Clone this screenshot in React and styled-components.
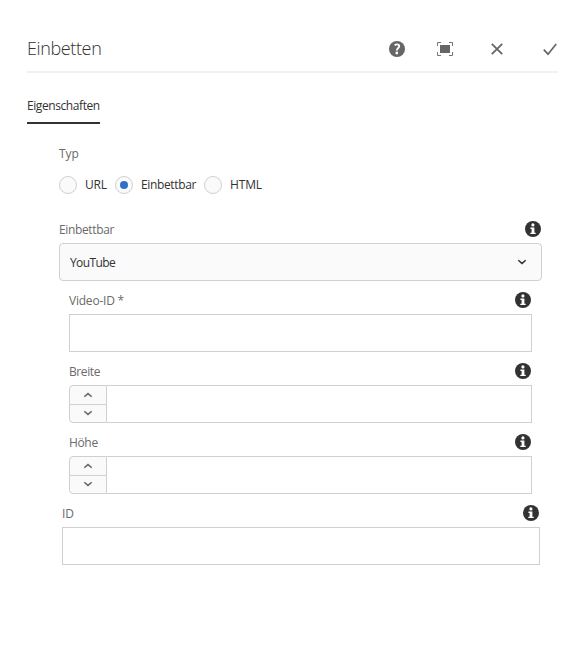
import React from "react";
import styled, { createGlobalStyle } from "styled-components";

const GlobalStyle = createGlobalStyle`
  *, *::before, *::after { box-sizing: border-box; }
  body { margin: 0; background: #fff; font-family: "Open Sans", "Noto Sans", sans-serif; }
`;

const Dialog = styled.form`
  width: 588px;
  height: 648px;
  padding: 25px 30px 0 27px;
  background: #fff;
  color: #323232;
  font-size: 12px;
`;

const Header = styled.header`
  display: flex;
  justify-content: space-between;
  width: 531px;
  height: 48px;
  border-bottom: 2px solid #f0f0f0;
`;

const Title = styled.h1`
  margin: 0;
  font-size: 18px;
  font-weight: 300;
  line-height: 47px;
  letter-spacing: -0.38px;
  color: #323232;
`;

const Actions = styled.div`
  display: flex;
  align-items: center;
  gap: 32px;
  height: 48px;
  margin-right: 1px;
`;

const IconButton = styled.button`
  display: flex;
  justify-content: flex-end;
  width: ${(p) => p.$width || 16}px;
  height: 16px;
  margin-right: ${(p) => p.$after || 0}px;
  padding: 0;
  border: 0;
  background: none;
  color: #666;
  svg { display: block; flex: none; }
`;

const Tabs = styled.nav`
  display: flex;
  padding-top: 24px;
`;

const Tab = styled.a`
  width: 73px;
  height: 27px;
  border-bottom: 2px solid #323232;
  line-height: 18px;
  white-space: nowrap;
`;

const Label = styled.span`
  color: #6a6a6a;
  line-height: 18px;
  white-space: nowrap;
  letter-spacing: ${(p) => p.$tracking || 0}px;
`;

const Text = styled.span`
  letter-spacing: ${(p) => p.$tracking || 0}px;
`;

const TypeGroup = styled.div`
  display: flex;
  flex-direction: column;
  gap: 13px;
  margin: 20px 0 0 32px;
`;

const TypeLabel = styled(Label)`
  line-height: 19px;
`;

const RadioRow = styled.div`
  display: flex;
  height: 18px;
`;

const Radio = styled.label`
  display: flex;
  align-items: center;
  gap: 8px;
  width: ${(p) => p.$width}px;
  line-height: 18px;
  white-space: nowrap;
`;

const RadioMark = styled.span`
  display: grid;
  place-items: center;
  flex: none;
  width: 18px;
  height: 18px;
  border: 1px solid #d0d0d0;
  border-radius: 50%;
  background: #fafafa;
  &::after {
    content: "";
    width: 8px;
    height: 8px;
    border-radius: 50%;
    background: ${(p) => (p.$checked ? "#326ec8" : "transparent")};
  }
`;

const Field = styled.div`
  width: ${(p) => p.$width}px;
  margin: ${(p) => p.$top || 0}px 0 0 ${(p) => p.$indent}px;
`;

const FieldHead = styled.div`
  display: flex;
  justify-content: space-between;
  height: 22px;
  padding-right: 1px;
  color: #323232;
`;

const Select = styled.div`
  display: flex;
  align-items: center;
  justify-content: space-between;
  height: 38px;
  padding: 0 14px 0 10px;
  border: 1px solid #d0d0d0;
  border-radius: 4px;
  background: #fafafa;
`;

const Input = styled.input`
  display: block;
  flex: 1;
  width: 100%;
  min-width: 0;
  height: 38px;
  margin: 0;
  border: 1px solid #d0d0d0;
  border-radius: 0;
  outline: 0;
  background: #fff;
`;

const NumberBox = styled.div`
  display: flex;
  ${Input} { border-left: 0; }
`;

const Stepper = styled.div`
  display: grid;
  grid-template-rows: 18px 18px;
  width: 38px;
  height: 38px;
  border: 1px solid #d0d0d0;
  border-radius: 4px 0 0 4px;
  background: #fafafa;
`;

const Step = styled.button`
  display: grid;
  place-items: center;
  padding: 0;
  border: 0;
  background: none;
  color: #666;
  & + & { padding-bottom: 1px; border-top: 1px solid #d0d0d0; }
`;

const InfoIcon = () => (
  <svg width="16" height="16" viewBox="0 0 16 16">
    <circle cx="8" cy="8" r="8" fill="currentColor" />
    <circle cx="7.9" cy="3.9" r="1.6" fill="#fff" />
    <path d="M5.4 6.5h4v5.2h1.3v1.4H5.3v-1.4h1.3V7.9H5.4z" fill="#fff" />
  </svg>
);

const HelpIcon = () => (
  <svg width="16" height="16" viewBox="0 0 16 16">
    <circle cx="8" cy="8" r="8" fill="currentColor" />
    <path d="M5.6 4.2C6.4 3.6 7.2 3.4 8 3.4c1.5 0 2.2.8 2.2 1.9 0 1.9-2.4 2.1-2.4 4.2" fill="none" stroke="#fff" strokeWidth="1.9" />
    <circle cx="7.8" cy="12" r="1.4" fill="#fff" />
  </svg>
);

const FullScreenIcon = () => (
  <svg width="16" height="16" viewBox="0 0 16 16">
    <path d="M3 4h10v8H3z" fill="currentColor" />
    <path d="M.5 5V1.5H4M12 1.5h3.5V5M15.5 11v3.5H12M4 14.5H.5V11" fill="none" stroke="currentColor" strokeWidth=".9" />
  </svg>
);

const CloseIcon = () => (
  <svg width="12" height="16" viewBox="0 0 12 16">
    <path d="M.8 2.8l10.4 10.4M11.2 2.8L.8 13.2" fill="none" stroke="currentColor" strokeWidth="1.8" />
  </svg>
);

const CheckIcon = () => (
  <svg width="14" height="16" viewBox="0 0 14 16">
    <path d="M.8 8.7l4.2 4.5L13.2 3" fill="none" stroke="currentColor" strokeWidth="1.7" />
  </svg>
);

const Chevron = ({ up }) => (
  <svg width="10" height="6" viewBox="0 0 10 6">
    <path d={up ? "M1.3 4.7L5 1.6l3.7 3.1" : "M1.3 1.3L5 4.4l3.7-3.1"} fill="none" stroke="currentColor" strokeWidth="1.5" />
  </svg>
);

const NumberField = ({ label, tracking }) => (
  <Field $width={463} $indent={42} $top={11}>
    <FieldHead><Label $tracking={tracking}>{label}</Label><InfoIcon /></FieldHead>
    <NumberBox>
      <Stepper>
        <Step type="button" aria-label="+"><Chevron up /></Step>
        <Step type="button" aria-label="-"><Chevron /></Step>
      </Stepper>
      <Input />
    </NumberBox>
  </Field>
);

export default function App() {
  return (
    <>
      <GlobalStyle />
      <Dialog>
        <Header>
          <Title>Einbetten</Title>
          <Actions>
            <IconButton type="button"><HelpIcon /></IconButton>
            <IconButton type="button"><FullScreenIcon /></IconButton>
            <IconButton type="button" $width={18} $after={8}><CloseIcon /></IconButton>
            <IconButton type="button" $width={14}><CheckIcon /></IconButton>
          </Actions>
        </Header>
        <Tabs><Tab><Text $tracking={-0.42}>Eigenschaften</Text></Tab></Tabs>
        <TypeGroup>
          <TypeLabel>Typ</TypeLabel>
          <RadioRow>
            <Radio $width={56}><RadioMark /><Text $tracking={-0.15}>URL</Text></Radio>
            <Radio $width={89}><RadioMark $checked /><Text $tracking={-0.36}>Einbettbar</Text></Radio>
            <Radio $width={70}><RadioMark /><Text $tracking={-0.15}>HTML</Text></Radio>
          </RadioRow>
        </TypeGroup>
        <Field $width={483} $indent={32} $top={27}>
          <FieldHead><Label $tracking={-0.36}>Einbettbar</Label><InfoIcon /></FieldHead>
          <Select><Text $tracking={-0.6}>YouTube</Text><Chevron /></Select>
        </Field>
        <Field $width={463} $indent={42} $top={11}>
          <FieldHead><Label $tracking={-0.22}>Video-ID *</Label><InfoIcon /></FieldHead>
          <Input />
        </Field>
        <NumberField label="Breite" tracking={-0.4} />
        <NumberField label="Höhe" tracking={-0.35} />
        <Field $width={478} $indent={35} $top={11}>
          <FieldHead><Label>ID</Label><InfoIcon /></FieldHead>
          <Input />
        </Field>
      </Dialog>
    </>
  );
}
